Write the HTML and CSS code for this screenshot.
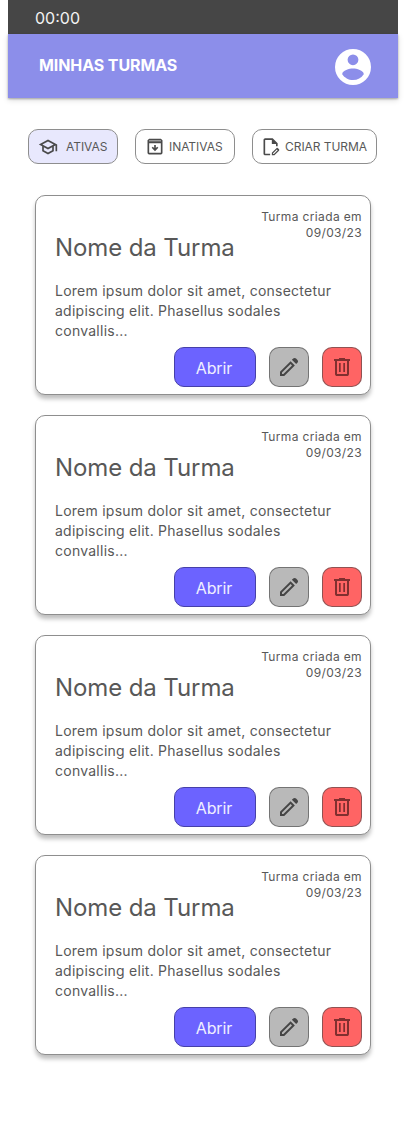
FILE: index.html
```html
<!DOCTYPE html>
<html lang="pt-BR">
<head>
<meta charset="utf-8">
<title>Minhas Turmas</title>
<link rel="stylesheet" href="styles.css">
</head>
<body>
<svg class="sprite" aria-hidden="true">
  <symbol id="pencil" viewBox="0 0 24 24"><path fill-rule="evenodd" d="M3 21v-4.250L13.600 6.150l4.250 4.250L7.250 21ZM5 19h1.400l8.600-8.600-1.400-1.400L5 17.600ZM14.900 4.850l1.300-1.350q.6-.6 1.450-.6t1.400.6l1.400 1.400q.6.600.6 1.400t-.6 1.450l-1.300 1.350Z"/></symbol>
  <symbol id="trash" viewBox="0 0 24 24"><path fill-rule="evenodd" d="M7 21q-.83 0-1.410-.59T5 19V6H4V4h5V3h6v1h5v2h-1v13q0 .83-.59 1.410T17 21ZM17 6H7v13h10ZM9 8h1.700v9H9Zm4.300 0H15v9h-1.700Z"/></symbol>
</svg>
<main class="app">
  <div class="status">00:00</div>
  <header class="header">
    <h1 class="header-title">MINHAS TURMAS</h1>
    <svg class="avatar" viewBox="2 2 20 20"><path fill-rule="evenodd" d="M12 2a10 10 0 1 0 0 20 10 10 0 0 0 0-20ZM12 5a3 3 0 1 1 0 6 3 3 0 0 1 0-6ZM12 19.2c-2.5 0-4.71-1.28-6-3.22.03-1.99 4-3.08 6-3.08s5.97 1.09 6 3.08a7.2 7.2 0 0 1-6 3.22Z"/></svg>
  </header>
  <nav class="filters">
    <button class="chip chip-active">
      <svg class="chip-icon" viewBox="0 0 24 24"><path d="M12 3L1 9l4 2.18v6L12 21l7-3.82v-6l2-1.09V17h2V9L12 3zm6.82 6L12 12.72 5.18 9 12 5.28 18.82 9zM17 15.99l-5 2.73-5-2.73v-3.72L12 15l5-2.73v3.72z"/></svg>
      <span>ATIVAS</span>
    </button>
    <button class="chip chip-inactive">
      <svg class="chip-icon" viewBox="0 0 24 24"><path d="M5 4h14v3H5z" opacity=".6"/><path fill-rule="evenodd" d="M5 2h14l2 2v15a2 2 0 0 1-2 2H5a2 2 0 0 1-2-2V4ZM5 7.500V19h14V7.500ZM5 4v1.500h14V4ZM11 9.500h2v3.700l1.600-1.600 1.400 1.400-4 4-4-4 1.400-1.400 1.600 1.600Z"/></svg>
      <span>INATIVAS</span>
    </button>
    <button class="chip chip-create">
      <svg class="chip-icon" viewBox="0 0 24 24"><path d="M11 22H5q-.8 0-1.400-.6T3 20V3.500q0-.8.600-1.400T5 1.500h9l6 6V11h-2V8.500h-5v-5H5V20h6Z"/><path fill-rule="evenodd" d="M13 22v-3.100l5.500-5.500q.3-.3.700-.4.800-.1 1.200.4l1.200 1.200q.8.800 0 1.800L16.100 22Zm1.500-1.500h1l4.500-4.500-1-1-4.500 4.500Z"/></svg>
      <span>CRIAR TURMA</span>
    </button>
  </nav>
  <section class="cards">
    <article class="card">
      <p class="date">Turma criada em<br>09/03/23</p>
      <h2 class="name">Nome da Turma</h2>
      <p class="text">Lorem ipsum dolor sit amet, consectetur<br>adipiscing elit. Phasellus sodales<br>convallis...</p>
      <div class="actions">
        <button class="btn open">Abrir</button>
        <button class="btn edit" aria-label="Editar"><svg class="icon"><use href="#pencil"/></svg></button>
        <button class="btn delete" aria-label="Excluir"><svg class="icon"><use href="#trash"/></svg></button>
      </div>
    </article>
    <article class="card">
      <p class="date">Turma criada em<br>09/03/23</p>
      <h2 class="name">Nome da Turma</h2>
      <p class="text">Lorem ipsum dolor sit amet, consectetur<br>adipiscing elit. Phasellus sodales<br>convallis...</p>
      <div class="actions">
        <button class="btn open">Abrir</button>
        <button class="btn edit" aria-label="Editar"><svg class="icon"><use href="#pencil"/></svg></button>
        <button class="btn delete" aria-label="Excluir"><svg class="icon"><use href="#trash"/></svg></button>
      </div>
    </article>
    <article class="card">
      <p class="date">Turma criada em<br>09/03/23</p>
      <h2 class="name">Nome da Turma</h2>
      <p class="text">Lorem ipsum dolor sit amet, consectetur<br>adipiscing elit. Phasellus sodales<br>convallis...</p>
      <div class="actions">
        <button class="btn open">Abrir</button>
        <button class="btn edit" aria-label="Editar"><svg class="icon"><use href="#pencil"/></svg></button>
        <button class="btn delete" aria-label="Excluir"><svg class="icon"><use href="#trash"/></svg></button>
      </div>
    </article>
    <article class="card">
      <p class="date">Turma criada em<br>09/03/23</p>
      <h2 class="name">Nome da Turma</h2>
      <p class="text">Lorem ipsum dolor sit amet, consectetur<br>adipiscing elit. Phasellus sodales<br>convallis...</p>
      <div class="actions">
        <button class="btn open">Abrir</button>
        <button class="btn edit" aria-label="Editar"><svg class="icon"><use href="#pencil"/></svg></button>
        <button class="btn delete" aria-label="Excluir"><svg class="icon"><use href="#trash"/></svg></button>
      </div>
    </article>
  </section>
</main>
</body>
</html>
```
FILE: styles.css
```css
* { box-sizing: border-box; }
body { margin: 0; background: #fff; color: #585858; font-family: Inter, sans-serif; }
h1, h2, p { margin: 0; font-weight: 400; }
button { font-family: inherit; color: inherit; padding: 0; }
svg { display: block; fill: currentColor; flex: none; }
.sprite { display: none; }
.app { width: 390px; height: 1131px; margin: 0 auto; }
.status { height: 34px; padding: 6px 27px 0; background: #464646; color: #f2f2f2; font-size: 16px; line-height: 24px; }
.header { height: 64px; padding: 0 27px 0 31px; display: flex; align-items: center; justify-content: space-between; background: #8c8eea; color: #fff; box-shadow: 0 1px 2px rgba(0,0,0,.3), 0 2px 6px rgba(0,0,0,.14); }
.header-title { font-size: 16px; line-height: 24px; font-weight: 700; letter-spacing: -.1px; margin-bottom: 2px; }
.avatar { width: 36px; height: 36px; margin-top: 2px; }
.filters { display: flex; gap: 17px; padding: 31px 0 0 20px; }
.chip { height: 35px; display: flex; align-items: center; border: 1px solid #8e8e8e; border-radius: 10px; background: #fff; font-size: 12px; line-height: 18px; letter-spacing: -.05px; white-space: nowrap; padding-left: 9px; }
.chip-icon { width: 20px; height: 20px; color: #4a4a4a; }
.chip-active { width: 90px; background: #e8e8fd; gap: 8px; }
.chip-inactive { width: 100px; gap: 4px; }
.chip-create { width: 125px; gap: 4px; padding-left: 8px; }
.cards { display: flex; flex-direction: column; gap: 20px; padding: 31px 27px 0; }
.card { height: 200px; padding: 13px 8px 7px 19px; border: 1px solid #8e8e8e; border-radius: 10px; background: #fff; box-shadow: 0 4px 4px rgba(0,0,0,.25); }
.date { text-align: right; font-size: 12px; line-height: 16px; letter-spacing: .36px; }
.name { margin-top: -9px; font-size: 24px; line-height: 32px; letter-spacing: -.1px; }
.text { margin-top: 17px; font-size: 14px; line-height: 20px; letter-spacing: .25px; }
.actions { display: flex; justify-content: flex-end; margin-top: 6px; }
.btn { height: 40px; width: 40px; display: flex; align-items: center; justify-content: center; border: 1px solid rgba(70,70,70,.6); border-radius: 10px; background-clip: border-box; }
.open { width: 82px; background: #6c63ff; color: #f0efff; font-size: 16px; line-height: 24px; letter-spacing: -.1px; border-color: #4640a8; padding: 2px 2px 0 0; }
.edit { margin-left: 13px; background: #b9b9b9; color: #464646; }
.delete { margin-left: 13px; background: #ff6464; color: #802f2f; }
.icon { width: 24px; height: 24px; }
```
